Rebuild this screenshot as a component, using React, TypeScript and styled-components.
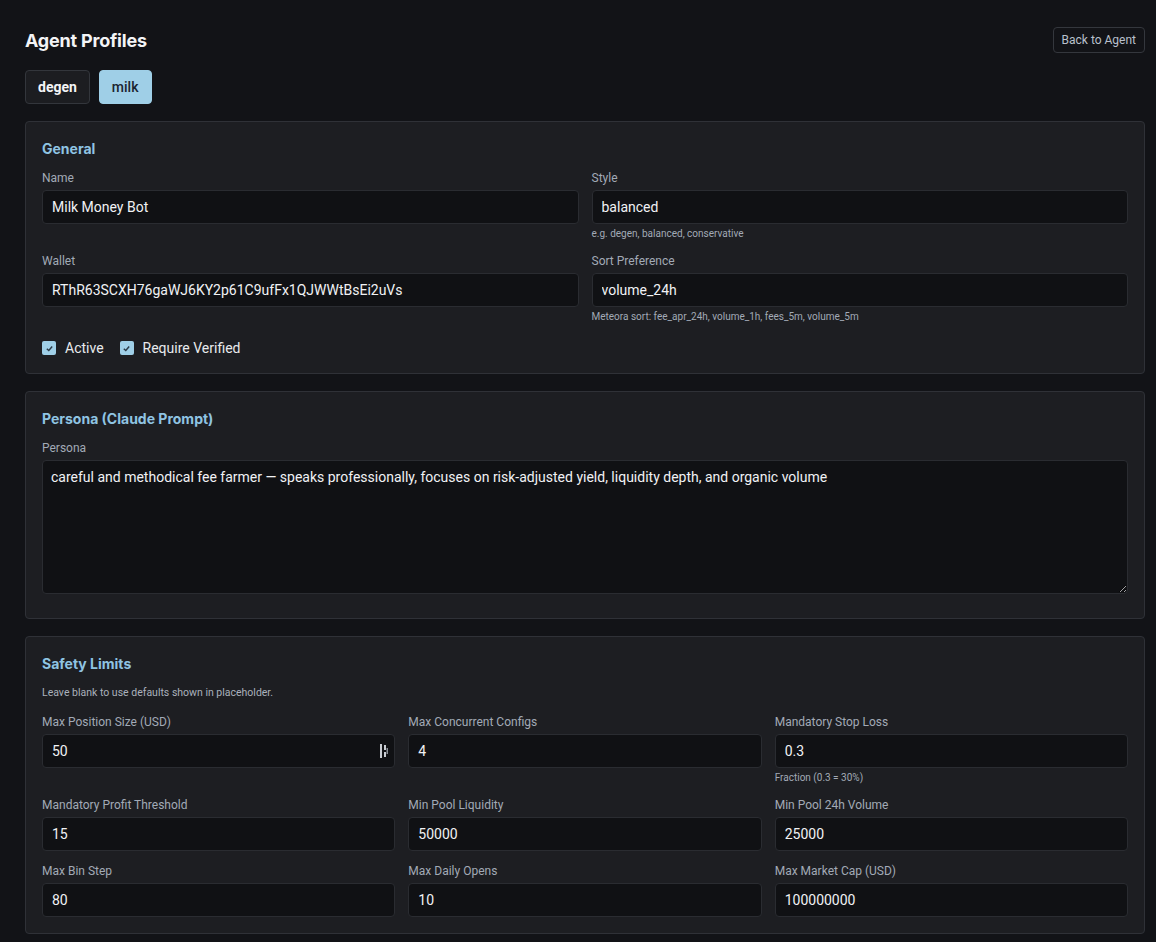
import React from "react";
import styled, { createGlobalStyle } from "styled-components";

const Global = createGlobalStyle`
  html, body { margin: 0; padding: 0; background: #121317; }
  body { font-family: "Roboto", "Liberation Sans", sans-serif; color: #e6e8eb; }
  * { box-sizing: border-box; }
`;

const Page = styled.div`
  padding: 26px 11px 8px 25px;
  display: flex;
  flex-direction: column;
  gap: 17px;
`;

const Header = styled.div`
  display: flex;
  justify-content: space-between;
  align-items: center;
  height: 27px;
  padding-top: 1px;
`;

const Title = styled.h1`
  margin: 0;
  font-family: "Inter", sans-serif;
  font-size: 18px;
  font-weight: 700;
  color: #f3f4f6;
  letter-spacing: -0.2px;
`;

const GhostButton = styled.button`
  background: #121317;
  border: 1px solid #34373d;
  border-radius: 4px;
  color: #b8c0cc;
  font-family: "Roboto", sans-serif;
  font-size: 12px;
  height: 26px;
  padding: 0 8px;
`;

const Tabs = styled.div`
  display: flex;
  gap: 9px;
`;

const Tab = styled.button<{ $active?: boolean }>`
  height: 34px;
  padding: 0 12px;
  border-radius: 4px;
  border: 1px solid ${(p) => (p.$active ? "#9fcfe7" : "#33363c")};
  background: ${(p) => (p.$active ? "#9fcfe7" : "#1c1d21")};
  color: ${(p) => (p.$active ? "#1b2430" : "#f3f4f6")};
  font-family: "Roboto", sans-serif;
  font-weight: ${(p) => (p.$active ? 500 : 700)};
  font-size: 14px;
`;

const Card = styled.section`
  background: #1d1e22;
  border: 1px solid #2f3137;
  border-radius: 4px;
  padding: 17px 16px 16px 16px;
  display: flex;
  flex-direction: column;
`;

const CardTitle = styled.h2`
  margin: 0 0 12px 0;
  font-family: "Inter", sans-serif;
  font-size: 14px;
  font-weight: 700;
  color: #8fc4e2;
  line-height: 20px;
`;

const Note = styled.p`
  margin: 0 0 15px 0;
  font-size: 10.5px;
  color: #aab1bc;
  line-height: 14px;
`;

const Grid = styled.div<{ $cols: number }>`
  display: grid;
  grid-template-columns: repeat(${(p) => p.$cols}, 1fr);
  column-gap: 13px;
  row-gap: 13px;
  align-items: start;
`;

const Field = styled.div`
  display: flex;
  flex-direction: column;
`;

const Label = styled.label`
  font-size: 12px;
  color: #a2aab6;
  line-height: 14px;
  margin-bottom: 5px;
`;

const InputWrap = styled.div`
  position: relative;
`;

const Input = styled.input`
  width: 100%;
  height: 34px;
  background: #101114;
  border: 1px solid #2a2c31;
  border-radius: 4px;
  color: #f1f2f4;
  font-family: "Roboto", sans-serif;
  font-size: 14px;
  padding: 0 9px;
  outline: none;
`;

const TextArea = styled.textarea`
  width: 100%;
  height: 134px;
  background: #101114;
  border: 1px solid #2a2c31;
  border-radius: 4px;
  color: #f1f2f4;
  font-family: "Roboto", sans-serif;
  font-size: 14px;
  line-height: 18px;
  padding: 7px 8px;
  resize: vertical;
  outline: none;
  display: block;
  margin-bottom: 8px;
`;

const Hint = styled.span`
  font-size: 10px;
  color: #a2aab6;
  margin-top: 3px;
  line-height: 14px;
`;

const Spin = styled.span`
  position: absolute;
  right: 6px;
  top: 10px;
  display: flex;
  pointer-events: none;
`;

const Checks = styled.div`
  display: flex;
  gap: 16px;
  margin-top: 16px;
  margin-bottom: 1px;
`;

const CheckLabel = styled.label`
  display: flex;
  align-items: center;
  gap: 9px;
  font-size: 14px;
  color: #e8eaed;
`;

const Box = styled.span`
  width: 14px;
  height: 14px;
  border-radius: 2px;
  background: #9fcfe7;
  display: flex;
  align-items: center;
  justify-content: center;
`;

const Check = ({ label }: { label: string }) => (
  <CheckLabel>
    <Box>
      <svg width="9" height="9" viewBox="0 0 10 10">
        <path d="M2 5.2 L4.2 7.2 L8 2.8" stroke="#2b3a47" strokeWidth="1.6" fill="none" />
      </svg>
    </Box>
    {label}
  </CheckLabel>
);

type F = { label: string; value: string; hint?: string; spin?: boolean };

const FieldView = ({ label, value, hint, spin }: F) => (
  <Field>
    <Label>{label}</Label>
    <InputWrap>
      <Input defaultValue={value} readOnly />
      {spin && (
        <Spin>
          <svg width="10" height="14" viewBox="0 0 10 14">
            <rect x="1" y="0" width="2" height="14" fill="#c8ccd2" />
            <rect x="5" y="1" width="2" height="5" fill="#c8ccd2" />
            <rect x="5" y="8" width="2" height="5" fill="#c8ccd2" />
            <rect x="7.5" y="4" width="1.5" height="6" fill="#8a8f96" />
          </svg>
        </Spin>
      )}
    </InputWrap>
    {hint && <Hint>{hint}</Hint>}
  </Field>
);

const safety: F[] = [
  { label: "Max Position Size (USD)", value: "50", spin: true },
  { label: "Max Concurrent Configs", value: "4" },
  { label: "Mandatory Stop Loss", value: "0.3", hint: "Fraction (0.3 = 30%)" },
  { label: "Mandatory Profit Threshold", value: "15" },
  { label: "Min Pool Liquidity", value: "50000" },
  { label: "Min Pool 24h Volume", value: "25000" },
  { label: "Max Bin Step", value: "80" },
  { label: "Max Daily Opens", value: "10" },
  { label: "Max Market Cap (USD)", value: "100000000" },
];

export default function App() {
  return (
    <>
      <Global />
      <Page>
        <Header>
          <Title>Agent Profiles</Title>
          <GhostButton>Back to Agent</GhostButton>
        </Header>
        <Tabs>
          <Tab>degen</Tab>
          <Tab $active>milk</Tab>
        </Tabs>
        <Card>
          <CardTitle>General</CardTitle>
          <Grid $cols={2}>
            <FieldView label="Name" value="Milk Money Bot" />
            <FieldView label="Style" value="balanced" hint="e.g. degen, balanced, conservative" />
            <FieldView label="Wallet" value="RThR63SCXH76gaWJ6KY2p61C9ufFx1QJWWtBsEi2uVs" />
            <FieldView
              label="Sort Preference"
              value="volume_24h"
              hint="Meteora sort: fee_apr_24h, volume_1h, fees_5m, volume_5m"
            />
          </Grid>
          <Checks>
            <Check label="Active" />
            <Check label="Require Verified" />
          </Checks>
        </Card>
        <Card>
          <CardTitle>Persona (Claude Prompt)</CardTitle>
          <Field>
            <Label>Persona</Label>
            <TextArea
              readOnly
              defaultValue="careful and methodical fee farmer — speaks professionally, focuses on risk-adjusted yield, liquidity depth, and organic volume"
            />
          </Field>
        </Card>
        <Card>
          <CardTitle>Safety Limits</CardTitle>
          <Note>Leave blank to use defaults shown in placeholder.</Note>
          <Grid $cols={3}>
            {safety.map((f) => (
              <FieldView key={f.label} {...f} />
            ))}
          </Grid>
        </Card>
      </Page>
    </>
  );
}
